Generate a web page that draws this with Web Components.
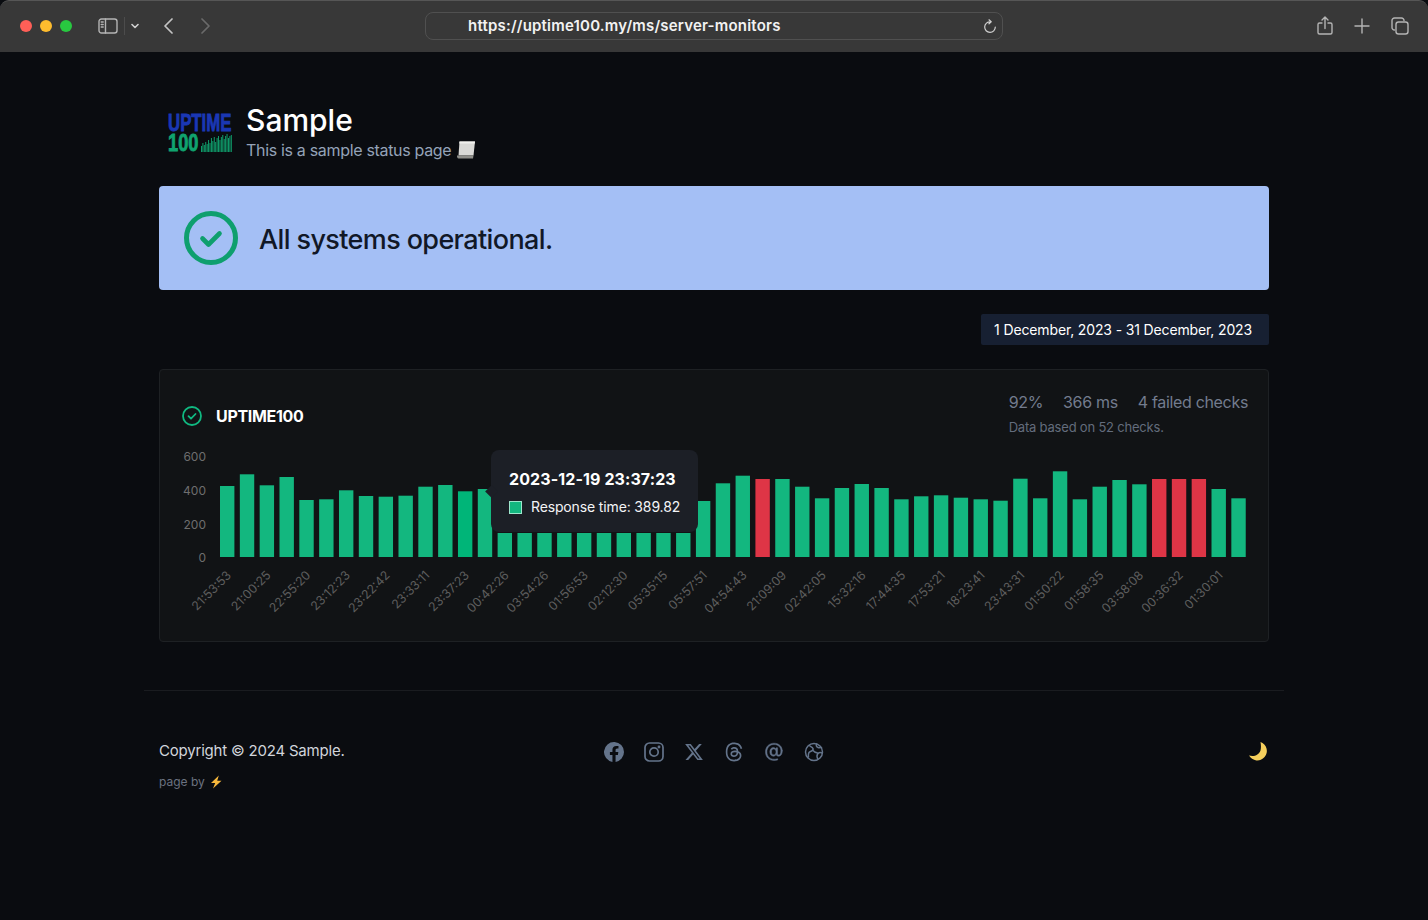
<!DOCTYPE html>
<html lang="en">
<head>
<meta charset="utf-8">
<title>Sample status page</title>
<style>
  html, body { margin: 0; height: 100%; background: #0a0c10; }
  body { font-family: Inter, "Liberation Sans", sans-serif; overflow: hidden; }
</style>
</head>
<body>
<browser-bar url="https://uptime100.my/ms/server-monitors"></browser-bar>
<status-page>
  <status-header title="Sample" subtitle="This is a sample status page"></status-header>
  <status-banner>All systems operational.</status-banner>
  <date-range>1 December, 2023 - 31 December, 2023</date-range>
  <monitor-card name="UPTIME100" uptime="92%" latency="366 ms" failed="4 failed checks" note="Data based on 52 checks."></monitor-card>
</status-page>
<page-footer></page-footer>

<script>
class BrowserBar extends HTMLElement {
  connectedCallback() {
    this.attachShadow({ mode: 'open' });
    this.shadowRoot.innerHTML = `
    <style>
      :host {
        display: flex;
        align-items: center;
        height: 52px;
        box-sizing: border-box;
        padding: 0 19px 2px 20px;
        background: #383838;
        border-top: 1px solid #565656;
        border-radius: 9px 9px 0 0;
        position: relative;
      }
      .lights { display: flex; gap: 8px; margin-right: 26px; }
      .lights i { width: 12px; height: 12px; border-radius: 50%; display: block; }
      svg { display: block; fill: none; stroke: #b4b4b4; stroke-width: 1.4; stroke-linecap: round; stroke-linejoin: round; }
      .side { margin-right: 6px; }
      .sep { width: 1px; height: 18px; background: #4c4c4c; margin-right: 6px; }
      .back { margin: 0 0 0 24px; }
      .fwd { margin-left: 26px; stroke: #6a6a6a; }
      .url {
        position: absolute;
        left: 425px;
        top: 11px;
        width: 578px;
        height: 28px;
        box-sizing: border-box;
        border: 1px solid #505050;
        border-radius: 8px;
        padding: 0 0 1px 42px;
        display: flex;
        align-items: center;
        justify-content: space-between;
        color: #f2f2f2;
        font: 600 15px/1 Inter, "Liberation Sans", sans-serif;
        letter-spacing: .2px;
      }
      .url svg { margin-right: 5px; margin-top: 2px; }
      .right { margin-left: auto; display: flex; align-items: center; gap: 22px; }
      .share { margin-right: -1px; }
      .tabs { margin-left: -1px; }
    </style>
    <div class="lights">
      <i style="background:#ff5f57"></i><i style="background:#febc2e"></i><i style="background:#28c840"></i>
    </div>
    <svg class="side" width="20" height="16" viewBox="0 0 20 16">
      <rect x="1" y="1" width="18" height="14" rx="2.5"/>
      <path d="M7.5 1v14M3.2 4h2M3.2 6.5h2M3.2 9h2" />
    </svg>
    <span class="sep"></span>
    <svg width="8" height="6" viewBox="0 0 8 6" style="stroke:#d0d0d0;stroke-width:1.6"><path d="M1 1.5l3 3 3-3"/></svg>
    <svg class="back" width="11" height="16" viewBox="0 0 11 16" style="stroke:#c4c4c4;stroke-width:1.7"><path d="M9 1L2 8l7 7"/></svg>
    <svg class="fwd" width="11" height="16" viewBox="0 0 11 16"  style="stroke:#6a6a6a;stroke-width:1.7"><path d="M2 1l7 7-7 7"/></svg>
    <div class="url">
      <span>${this.getAttribute('url')}</span>
      <svg width="14" height="15" viewBox="0 0 14 15" style="stroke:#d0d0d0;stroke-width:1.2">
        <path d="M7.4 2.8A5.3 5.3 0 1 0 12.3 8M6 .8l2.2 2-2.2 2" />
      </svg>
    </div>
    <div class="right">
      <svg class="share" width="16" height="20" viewBox="0 0 16 20">
        <path d="M5 7H2.5A1.5 1.5 0 0 0 1 8.5v8A1.5 1.5 0 0 0 2.5 18h11a1.5 1.5 0 0 0 1.5-1.5v-8A1.5 1.5 0 0 0 13.500 7H11M8 12.500V1.500M5 4l3-3 3 3"/>
      </svg>
      <svg width="16" height="16" viewBox="0 0 16 16"><path d="M8 1v14M1 8h14"/></svg>
      <svg class="tabs" width="18" height="18" viewBox="0 0 18 18">
        <path d="M3.500 13A2.500 2.500 0 0 1 1 10.500v-7A2.500 2.500 0 0 1 3.500 1h7A2.500 2.500 0 0 1 13 3.500"/>
        <rect x="5" y="5" width="12" height="12" rx="2.500"/>
      </svg>
    </div>`;
  }
}

class StatusPage extends HTMLElement {
  connectedCallback() {
    this.attachShadow({ mode: 'open' });
    this.shadowRoot.innerHTML = `
    <style>
      :host {
        display: flex;
        flex-direction: column;
        width: 1110px;
        margin: 0 auto;
        padding-top: 44px;
      }
    </style>
    <slot></slot>`;
  }
}

class StatusHeader extends HTMLElement {
  connectedCallback() {
    const bars = [6,9,7,10,8,12,9,14,11,15,10,14,16,12,15,17,13,16,18,14,16,17];
    this.attachShadow({ mode: 'open' });
    this.shadowRoot.innerHTML = `
    <style>
      :host { display: flex; align-items: center; height: 71px; padding-left: 9px; gap: 14px; }
      .logo { position: relative; width: 64px; height: 40px; margin-top: 3px; color: #1a37b4; font: 700 24px/20px "Liberation Sans", sans-serif; white-space: nowrap; }
      .logo span { display: block; height: 20px; transform-origin: 0 50%; -webkit-text-stroke: .9px currentColor; }
      .up { transform: scaleX(.7); }
      .num { color: #10a36f; transform: scaleX(.76); }
      .logo svg { position: absolute; left: 33px; bottom: 1px; display: block; }
      h1 { margin: 0; font-size: 30px; line-height: 36px; font-weight: 500; color: #fff; }
      p { margin: 0; font-size: 16px; line-height: 24px; color: #94a3b8; display: flex; align-items: center; gap: 5px; letter-spacing: -.32px; }
    </style>
    <div class="logo">
      <span class="up">UPTIME</span>
      <span class="num">100</span>
      <svg width="31" height="18" viewBox="0 0 31 18">
        ${bars.map((h, i) => `<rect x="${i * 1.42}" y="${18 - h}" width=".95" height="${h}" fill="#10a36f"/>`).join('')}
      </svg>
    </div>
    <div>
      <h1>${this.getAttribute('title')}</h1>
      <p>${this.getAttribute('subtitle')}
        <svg width="20" height="20" viewBox="0 0 20 20">
          <path d="M3.500 1.500H19L17.500 15.500H2.500Z" fill="#d9d9d6"/>
          <path d="M1 15.500H17.500L17 18.500H2.500C1.500 18.500 .8 17 1 15.500Z" fill="#8f8f8a"/>
          <path d="M3.500 1.500H19L18.800 3.500H3.300Z" fill="#f1f1ee"/>
        </svg>
      </p>
    </div>`;
  }
}

class StatusBanner extends HTMLElement {
  connectedCallback() {
    this.attachShadow({ mode: 'open' });
    this.shadowRoot.innerHTML = `
    <style>
      :host {
        display: flex;
        align-items: center;
        gap: 21px;
        height: 104px;
        box-sizing: border-box;
        margin-top: 19px;
        padding-left: 25px;
        background: #a4bff5;
        border-radius: 4px;
        color: #111827;
        font-size: 27px;
        font-weight: 500;
        letter-spacing: -.62px;
      }
      svg { display: block; }
      span { padding-top: 2px; }
    </style>
    <svg width="54" height="54" viewBox="0 0 54 54" fill="none" stroke="#0e9f6e">
      <circle cx="27" cy="27" r="24.500" stroke-width="5"/>
      <path d="M18.500 27.500l6 6 11-11" stroke-width="4.600" stroke-linecap="round" stroke-linejoin="round"/>
    </svg>
    <span><slot></slot></span>`;
  }
}

class DateRange extends HTMLElement {
  connectedCallback() {
    this.attachShadow({ mode: 'open' });
    this.shadowRoot.innerHTML = `
    <style>
      :host {
        display: block;
        align-self: flex-end;
        margin-top: 24px;
        padding: 0 17px 0 13px;
        height: 31px;
        line-height: 31px;
        background: #172032;
        border-radius: 2px;
        color: #fff;
        font-size: 14px;
        letter-spacing: -.14px;
      }
    </style>
    <slot></slot>`;
  }
}

class MonitorCard extends HTMLElement {
  connectedCallback() {
    this.attachShadow({ mode: 'open' });
    const a = n => this.getAttribute(n);
    this.shadowRoot.innerHTML = `
    <style>
      :host {
        display: block;
        box-sizing: border-box;
        height: 273px;
        margin-top: 24px;
        padding: 20px 20px 0 20px;
        background: #111315;
        border: 1px solid #1e2124;
        border-radius: 4px;
      }
      header { display: flex; justify-content: space-between; align-items: center; height: 52px; }
      .name { display: flex; align-items: center; gap: 14px; color: #fff; font-weight: 700; font-size: 16px; letter-spacing: -.33px; padding-left: 2px; }
      .name svg { display: block; }
      .right { margin-top: -8px; }
      .stats { display: flex; gap: 20px; font-size: 16px; line-height: 24px; color: #737c8e; letter-spacing: -.33px; }
      .note { font-size: 13px; line-height: 16px; color: #636c7c; margin-top: 5px; letter-spacing: -.2px; }
    </style>
    <header>
      <div class="name">
        <svg width="20" height="20" viewBox="0 0 20 20" fill="none" stroke="#10b981">
          <circle cx="10" cy="10" r="9" stroke-width="1.800"/>
          <path d="M6.500 10.200l2.500 2.500 4.500-4.700" stroke-width="1.800" stroke-linecap="round" stroke-linejoin="round"/>
        </svg>
        <span>${a('name')}</span>
      </div>
      <div class="right">
        <div class="stats"><span>${a('uptime')}</span><span>${a('latency')}</span><span>${a('failed')}</span></div>
        <div class="note">${a('note')}</div>
      </div>
    </header>
    <bar-chart></bar-chart>`;
  }
}

class BarChart extends HTMLElement {
  connectedCallback() {
    this.attachShadow({ mode: 'open' });
    const baseline = 111;
    // top edge of each bar, in page pixels
    const tops = [486,474.3,485.3,477,500,499.3,490.3,496,496.700,495.700,486.700,485,491.300,489,
      533,533,533,533,533,533,533,533,533,533,
      501,483.300,475.700,479,479,486.700,498.300,488,484,488,499.300,496.300,495.300,497.700,499.300,500.700,
      478.700,498.300,471.300,499.300,486.700,480,484.300,479,479,479,489,498.300];
    const failed = [27, 47, 48, 49];
    const labels = ['21:53:53','21:00:25','22:55:20','23:12:23','23:22:42','23:33:11','23:37:23','00:42:26','03:54:26','01:56:53','02:12:30','05:35:15','05:57:51','04:54:43','21:09:09','02:42:05','15:32:16','17:44:35','17:53:21','18:23:41','23:43:31','01:50:22','01:58:35','03:58:08','00:36:32','01:30:01'];
    const pitch = 19.83;
    const bars = tops.map((t, i) => {
      const x = 40 + i * pitch;
      const h = 557 - t;
      const color = failed.includes(i) ? '#de3546' : (i === 12 ? '#00b578' : '#13b77f');
      return `<rect x="${x.toFixed(2)}" y="${baseline - h}" width="14.400" height="${h}" fill="${color}"/>`;
    }).join('');
    const xLabels = labels.map((l, i) => {
      const x = 40 + i * 2 * pitch + 12;
      return `<text transform="translate(${x.toFixed(2)} 130) rotate(-45)" text-anchor="end">${l}</text>`;
    }).join('');
    const yLabels = [[600, 15], [400, 49], [200, 83], [0, 116]].map(([v, y]) =>
      `<text x="26" y="${y}" text-anchor="end">${v}</text>`).join('');

    this.shadowRoot.innerHTML = `
    <style>
      :host { display: block; position: relative; height: 180px; margin-top: 4px; }
      svg { display: block; }
      text { font: 12.3px Inter, "Liberation Sans", sans-serif; fill: #5e5e5e; }
      .y text { font-size: 12px; fill: #6e6e6e; }
    </style>
    <svg width="1068" height="180" viewBox="0 0 1068 180">
      ${bars}
      <g class="y">${yLabels}</g>
      ${xLabels}
    </svg>
    <chart-tooltip date="2023-12-19 23:37:23" label="Response time: 389.82"></chart-tooltip>`;
  }
}

class ChartTooltip extends HTMLElement {
  connectedCallback() {
    this.attachShadow({ mode: 'open' });
    this.shadowRoot.innerHTML = `
    <style>
      :host {
        position: absolute;
        left: 311px;
        top: 4px;
        width: 207px;
        height: 82px;
        box-sizing: border-box;
        padding: 17px 18px;
        background: #1c1f26;
        border-radius: 8px;
        color: #fff;
        white-space: nowrap;
      }
      :host::before {
        content: '';
        position: absolute;
        left: -4px;
        top: 37px;
        width: 9px;
        height: 9px;
        background: #1c1f26;
        transform: rotate(45deg);
      }
      .date { font-size: 16px; line-height: 24px; font-weight: 700; color: #fff; position: relative; letter-spacing: .1px; }
      .row { display: flex; align-items: center; gap: 9px; font-size: 14px; line-height: 20px; margin-top: 6px; color: #f3f4f6; position: relative; letter-spacing: -.14px; }
      .swatch { flex: none; width: 13px; height: 13px; box-sizing: border-box; background: #13b77f; border: 1px solid #9ee6cd; }
    </style>
    <div class="date">${this.getAttribute('date')}</div>
    <div class="row"><span class="swatch"></span><span>${this.getAttribute('label')}</span></div>`;
  }
}

class PageFooter extends HTMLElement {
  connectedCallback() {
    this.attachShadow({ mode: 'open' });
    this.shadowRoot.innerHTML = `
    <style>
      :host {
        display: block;
        width: 1140px;
        box-sizing: border-box;
        margin: 48px auto 0;
        padding: 48px 15px 0;
        border-top: 1px solid #1a1c20;
      }
      .row { display: grid; grid-template-columns: 1fr auto 1fr; align-items: start; }
      .copy { font-size: 15px; line-height: 24px; color: #d1d5db; letter-spacing: -.2px; }
      .by { font-size: 12px; line-height: 16px; color: #6b7280; margin-top: 11px; display: flex; align-items: center; gap: 5px; }
      .icons { display: flex; gap: 20px; margin: 3px 0 0 -1px; }
      .icons svg { width: 20px; height: 20px; display: block; fill: none; stroke: #64748b; stroke-width: 1.700; stroke-linecap: round; stroke-linejoin: round; }
      .icons .solid { fill: #64748b; stroke: none; }
      .icons .at { stroke: #64748b; stroke-width: .3; }
      .moon { justify-self: end; margin: 2px 1px 0 0; display: block; }
    </style>
    <div class="row">
      <div>
        <div class="copy">Copyright © 2024 Sample.</div>
        <div class="by">page by
          <svg width="13" height="14" viewBox="0 0 13 14"><path d="M8.800 .5L1 8h4.200L3 13.500 11.500 5.800H7.200Z" fill="#f6b73c"/></svg>
        </div>
      </div>
      <div class="icons">
        <svg class="solid" viewBox="0 0 20 20"><path d="M20 10a10 10 0 1 0-11.560 9.880v-6.990H5.900V10h2.540V7.800c0-2.500 1.490-3.890 3.780-3.890 1.090 0 2.240.2 2.240.2v2.460h-1.260c-1.240 0-1.630.77-1.630 1.560V10h2.770l-.44 2.890h-2.330v6.990A10 10 0 0 0 20 10z"/></svg>
        <svg viewBox="0 0 20 20"><rect x="1" y="1" width="18" height="18" rx="4.500"/><circle cx="10" cy="10" r="4.200"/><circle cx="15" cy="5" r=".6" fill="#64748b"/></svg>
        <svg class="solid" viewBox="-1 -1 18 18"><path d="M12.600.75h2.454l-5.360 6.142L16 15.250h-4.937l-3.867-5.070-4.425 5.070H.316l5.733-6.570L0 .75h5.063l3.495 4.633L12.601.75Zm-.86 13.028h1.360L4.323 2.145H2.865z"/></svg>
        <svg class="solid" viewBox="-.5 -.5 17 17"><path d="M6.321 6.016c-.27-.18-1.166-.802-1.166-.802.756-1.081 1.753-1.502 3.132-1.502.975 0 1.803.327 2.394.948s.928 1.509 1.005 2.644q.492.207.905.484c1.109.745 1.719 1.860 1.719 3.137 0 2.716-2.226 5.075-6.256 5.075C4.594 16 1 13.987 1 7.994 1 2.034 4.482 0 8.044 0 9.690 0 13.550.243 15 5.036l-1.360.353C12.516 1.974 10.163 1.430 8.006 1.430c-3.565 0-5.582 2.171-5.582 6.790 0 4.143 2.254 6.343 5.630 6.343 2.777 0 4.847-1.443 4.847-3.556 0-1.438-1.208-2.127-1.270-2.127-.236 1.234-.868 3.310-3.644 3.310-1.618 0-3.013-1.118-3.013-2.582 0-2.090 1.984-2.847 3.550-2.847.586 0 1.294.04 1.663.114 0-.637-.54-1.728-1.900-1.728-1.250 0-1.566.405-1.967.868ZM8.716 8.190c-2.040 0-2.304.87-2.304 1.416 0 .878 1.043 1.168 1.600 1.168 1.020 0 2.067-.282 2.232-2.423a6.200 6.200 0 0 0-1.528-.161"/></svg>
        <svg class="solid at" viewBox="1 1.400 13.200 13.200"><path d="M13.106 7.222c0-2.967-2.249-5.032-5.482-5.032-3.350 0-5.646 2.318-5.646 5.702 0 3.493 2.235 5.708 5.762 5.708.862 0 1.689-.123 2.304-.335v-.862c-.43.199-1.354.328-2.290.328-2.926 0-4.813-1.880-4.813-4.798 0-2.844 1.921-4.881 4.594-4.881 2.735 0 4.608 1.688 4.608 4.156 0 1.682-.554 2.769-1.416 2.769-.492 0-.772-.28-.772-.76V5.206H8.923v.834h-.11c-.266-.595-.881-.964-1.600-.964-1.400 0-2.378 1.162-2.378 2.823 0 1.737.957 2.906 2.379 2.906.8 0 1.415-.39 1.709-1.087h.11c.081.67.703 1.148 1.503 1.148 1.572 0 2.570-1.415 2.570-3.643zm-7.177.704c0-1.197.54-1.907 1.456-1.907.93 0 1.524.738 1.524 1.907S8.308 9.840 7.371 9.840c-.895 0-1.442-.725-1.442-1.914"/></svg>
        <svg viewBox="0 0 20 20" style="stroke-width:1.500"><circle cx="10" cy="10" r="8.500"/><path d="M5 3.500c1.500 1 3.500 1.500 4 3s-1 2.500-2.500 3-2.500 2-2 5.500M12.500 2c-.5 1.800 0 3 1.500 3.500s2.500 0 3.500 0M18.300 11c-2-.8-3.500-.3-4.500.8s-.8 3.700 0 5.500M8.500 8c1.200 1.500 3 2.500 5 3"/></svg>
      </div>
      <svg class="moon" width="20" height="20" viewBox="0 0 20 20">
        <path d="M12.500 1A9.500 9.500 0 1 1 1 14.500c5 1.500 10-.5 11.500-5 .7-2.800.5-6 0-8.500z" fill="#f5cf5c"/>
      </svg>
    </div>`;
  }
}

customElements.define('browser-bar', BrowserBar);
customElements.define('status-page', StatusPage);
customElements.define('status-header', StatusHeader);
customElements.define('status-banner', StatusBanner);
customElements.define('date-range', DateRange);
customElements.define('monitor-card', MonitorCard);
customElements.define('bar-chart', BarChart);
customElements.define('chart-tooltip', ChartTooltip);
customElements.define('page-footer', PageFooter);
</script>
</body>
</html>
